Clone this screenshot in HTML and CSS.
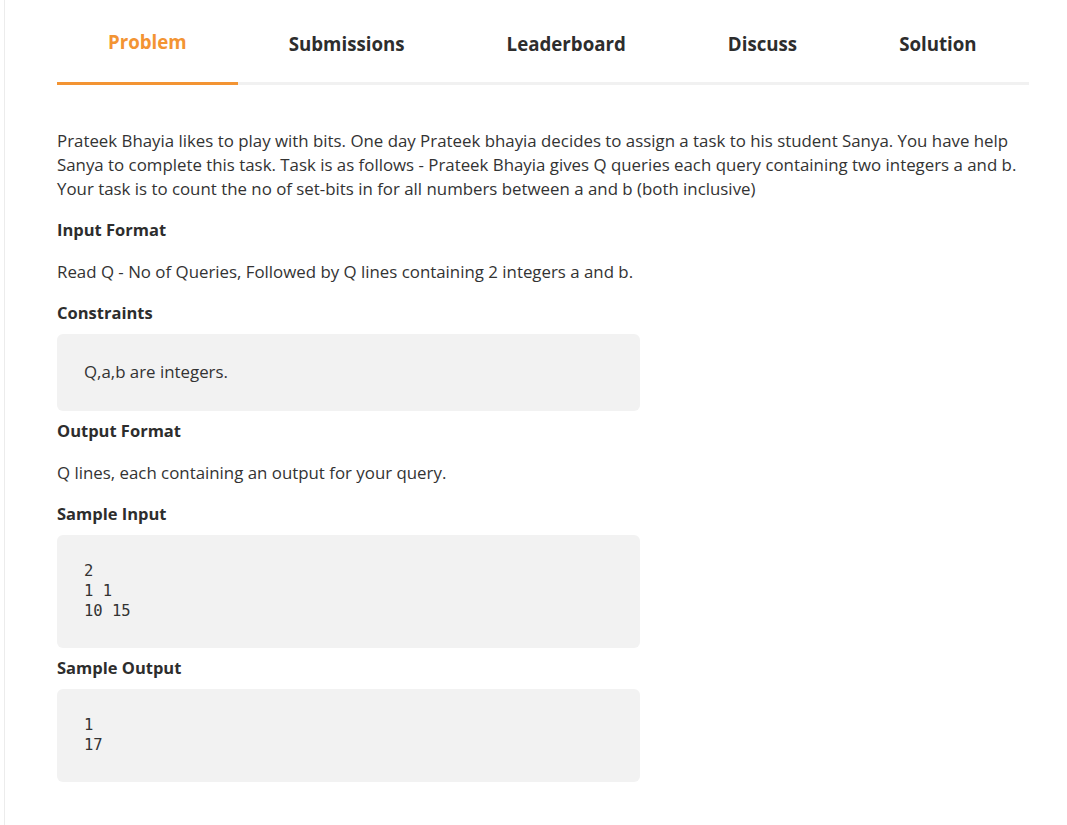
FILE: index.html
```html
<!DOCTYPE html>
<html lang="en">
<head>
<meta charset="utf-8">
<title>Problem</title>
<link rel="stylesheet" href="styles.css">
</head>
<body>
<div class="page">
  <div class="content">
    <nav class="tabs">
      <a class="tab active">Problem</a>
      <a class="tab">Submissions</a>
      <a class="tab">Leaderboard</a>
      <a class="tab">Discuss</a>
      <a class="tab">Solution</a>
    </nav>
    <div class="problem">
      <p class="intro">Prateek Bhayia likes to play with bits. One day Prateek bhayia decides to assign a task to his student Sanya. You have help Sanya to complete this task. Task is as follows - Prateek Bhayia gives Q queries each query containing two integers a and b. Your task is to count the no of set-bits in for all numbers between a and b (both inclusive)</p>
      <h4 class="heading">Input Format</h4>
      <p class="text">Read Q - No of Queries, Followed by Q lines containing 2 integers a and b.</p>
      <h4 class="heading">Constraints</h4>
      <div class="box"><p class="box-text">Q,a,b are integers.</p></div>
      <h4 class="heading">Output Format</h4>
      <p class="text">Q lines, each containing an output for your query.</p>
      <h4 class="heading">Sample Input</h4>
      <div class="box"><pre class="code">2
1 1
10 15</pre></div>
      <h4 class="heading">Sample Output</h4>
      <div class="box"><pre class="code">1
17</pre></div>
    </div>
  </div>
</div>
</body>
</html>
```
FILE: styles.css
```css
html, body {
  margin: 0;
  padding: 0;
  background: #ffffff;
}
body {
  font-family: "Open Sans", "Noto Sans", sans-serif;
  color: #333333;
}
.page {
  margin-left: 4px;
  border-left: 1px solid #ececec;
  min-height: 825px;
}
.content {
  padding: 0 38px 0 52px;
}
.tabs {
  display: flex;
  border-bottom: 3px solid #f1f1f1;
}
.tab {
  padding: 32px 51px 26px;
  font-size: 18.7px;
  line-height: 24px;
  font-weight: 700;
  color: #2d2d2d;
  cursor: pointer;
}
.tab.active {
  color: #f39433;
  padding-top: 30px;
  padding-bottom: 28px;
  border-bottom: 3px solid #f39433;
  margin-bottom: -3px;
}
.problem {
  padding-top: 26px;
}
.intro, .text {
  font-size: 16.85px;
  line-height: 24px;
  margin: 18px 0 17px;
}
.heading {
  font-size: 16.5px;
  line-height: 24px;
  font-weight: 700;
  margin: 8px 0 9px;
  color: #2d2d2d;
}
.box {
  width: 60%;
  background: #f2f2f2;
  border-radius: 6px;
  margin: 9px 0 8px;
  padding: 26px 27px 27px;
  box-sizing: border-box;
}
.box-text {
  margin: 0;
  font-size: 16.85px;
  line-height: 24px;
}
.code {
  margin: 0;
  font-family: "DejaVu Sans Mono", monospace;
  font-size: 15.5px;
  line-height: 20px;
  color: #333333;
}
```
